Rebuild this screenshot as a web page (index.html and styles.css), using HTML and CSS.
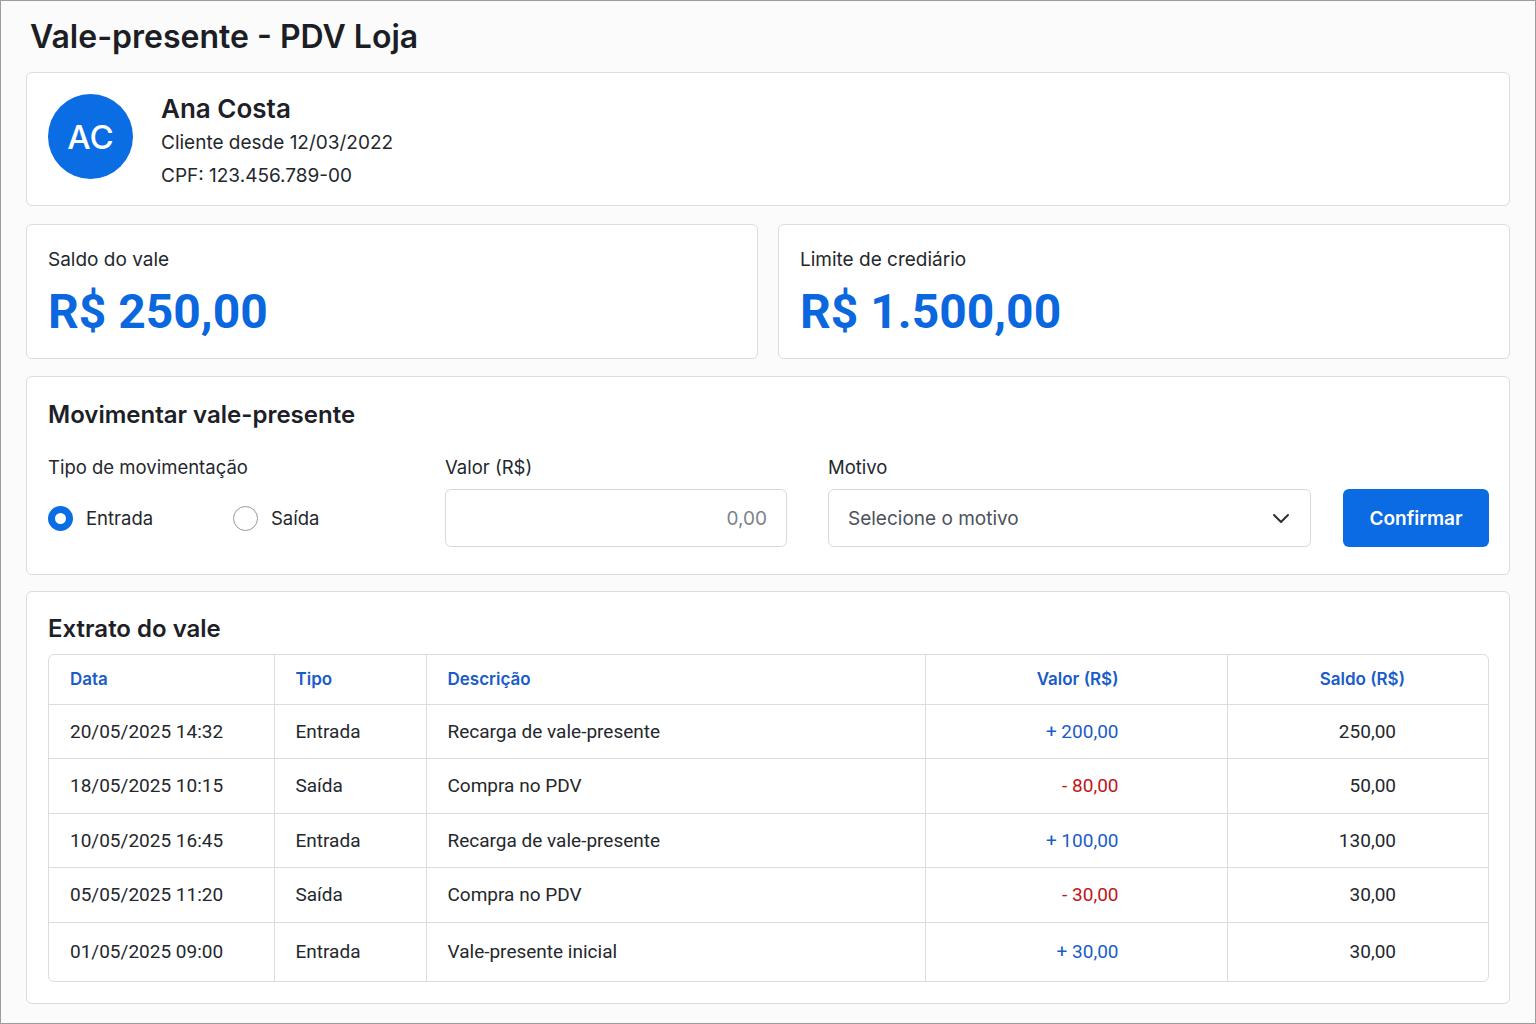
FILE: index.html
```html
<!doctype html>
<html lang="pt-BR">
<head>
    <meta charset="utf-8">
    <title>Vale-presente - PDV Loja</title>
    <link rel="stylesheet" href="styles.css">
</head>

<body>
<div class="page">
    <h1 class="page_title">Vale-presente - PDV Loja</h1>

    <!-- cliente -->
    <div class="card client">
        <div class="avatar">AC</div>
        <div class="client_info">
            <div class="client_name">Ana Costa</div>
            <div class="client_line">Cliente desde 12/03/2022</div>
            <div class="client_line">CPF: 123.456.789-00</div>
        </div>
    </div>

    <!-- saldos -->
    <div class="stats">
        <div class="card stat">
            <div class="stat_label">Saldo do vale</div>
            <div class="stat_value">R$ 250,00</div>
        </div>
        <div class="card stat">
            <div class="stat_label">Limite de crediário</div>
            <div class="stat_value">R$ 1.500,00</div>
        </div>
    </div>

    <!-- movimentar -->
    <div class="card move">
        <h2 class="card_title">Movimentar vale-presente</h2>
        <div class="move_form">
            <div class="field_label">Tipo de movimentação</div>
            <div class="field_label">Valor (R$)</div>
            <div class="field_label">Motivo</div>
            <div></div>

            <div class="radios">
                <label class="radio on"><span class="radio_dot"></span>Entrada</label>
                <label class="radio"><span class="radio_dot"></span>Saída</label>
            </div>
            <div>
                <input class="input" type="text" placeholder="0,00">
            </div>
            <div>
                <div class="select">
                    <span>Selecione o motivo</span>
                    <svg width="18" height="18" viewBox="0 0 18 18">
                        <polyline points="2,6 9,13 16,6" fill="none" stroke="#2b2f36" stroke-width="2" stroke-linecap="round" stroke-linejoin="round"/>
                    </svg>
                </div>
            </div>
            <a href="javascript:;" class="btn">Confirmar</a>
        </div>
    </div>

    <!-- extrato -->
    <div class="card statement">
        <h2 class="card_title">Extrato do vale</h2>
        <div class="table_wrap">
            <table class="table">
                <thead>
                <tr>
                    <th class="c_date">Data</th>
                    <th class="c_type">Tipo</th>
                    <th class="c_desc">Descrição</th>
                    <th class="c_val">Valor (R$)</th>
                    <th class="c_bal">Saldo (R$)</th>
                </tr>
                </thead>
                <tbody>
                <tr>
                    <td>20/05/2025 14:32</td>
                    <td>Entrada</td>
                    <td>Recarga de vale-presente</td>
                    <td class="c_val plus">+ 200,00</td>
                    <td class="c_bal">250,00</td>
                </tr>
                <tr>
                    <td>18/05/2025 10:15</td>
                    <td>Saída</td>
                    <td>Compra no PDV</td>
                    <td class="c_val minus">- 80,00</td>
                    <td class="c_bal">50,00</td>
                </tr>
                <tr>
                    <td>10/05/2025 16:45</td>
                    <td>Entrada</td>
                    <td>Recarga de vale-presente</td>
                    <td class="c_val plus">+ 100,00</td>
                    <td class="c_bal">130,00</td>
                </tr>
                <tr>
                    <td>05/05/2025 11:20</td>
                    <td>Saída</td>
                    <td>Compra no PDV</td>
                    <td class="c_val minus">- 30,00</td>
                    <td class="c_bal">30,00</td>
                </tr>
                <tr>
                    <td>01/05/2025 09:00</td>
                    <td>Entrada</td>
                    <td>Vale-presente inicial</td>
                    <td class="c_val plus">+ 30,00</td>
                    <td class="c_bal">30,00</td>
                </tr>
                </tbody>
            </table>
        </div>
    </div>
</div>
</body>

</html>
```

FILE: styles.css
```css
* {
    box-sizing: border-box;
}

body,
h1,
h2 {
    margin: 0;
    padding: 0;
}

body {
    background-color: #fff;
    font-family: Inter, "Noto Sans", sans-serif;
    color: #1d2027;
}

.page {
    width: 1536px;
    height: 1024px;
    border: 1px solid #9d9d9d;
    background-color: #fbfbfb;
    padding: 16px 25px 0;
}

.page_title {
    font-size: 32px;
    line-height: 40px;
    font-weight: 600;
    padding-left: 4px;
    margin-bottom: 15px;
    color: #1b1e25;
}

.card {
    background-color: #fff;
    border: 1px solid #dcdcdc;
    border-radius: 6px;
}

/* cliente */
.client {
    display: flex;
    align-items: flex-start;
    padding: 19px 21px 13px;
    margin-bottom: 18px;
}

.avatar {
    width: 85px;
    height: 85px;
    margin-top: 2px;
    border-radius: 50%;
    background-color: #0b6de3;
    color: #fff;
    font-size: 33px;
    font-weight: 500;
    display: flex;
    align-items: center;
    justify-content: center;
}

.client_info {
    margin-left: 28px;
}

.client_name {
    font-size: 26px;
    line-height: 34px;
    font-weight: 600;
}

.client_line {
    font-size: 19px;
    line-height: 33px;
    color: #24272d;
}

/* saldos */
.stats {
    display: grid;
    grid-template-columns: 1fr 1fr;
    gap: 20px;
    margin-bottom: 17px;
}

.stat {
    padding: 21px 21px 18px;
}

.stat_label {
    font-size: 19px;
    line-height: 28px;
    color: #24272d;
}

.stat_value {
    margin-top: 10px;
    font-family: Roboto, Inter, sans-serif;
    font-size: 48px;
    line-height: 56px;
    font-weight: 700;
    color: #0a67de;
}

/* movimentar */
.card_title {
    font-size: 24px;
    line-height: 34px;
    font-weight: 600;
}

.move {
    padding: 21px 20px 27px 21px;
    margin-bottom: 16px;
}

.move_form {
    display: grid;
    grid-template-columns: 397px 383px 515px 146px;
    grid-template-rows: 28px 58px;
    row-gap: 8px;
    margin-top: 21px;
}

.field_label {
    font-size: 18.5px;
    line-height: 28px;
    color: #24272d;
}

.radios {
    display: flex;
    align-items: center;
}

.radio {
    display: flex;
    align-items: center;
    width: 185px;
    font-size: 18.5px;
    color: #24272d;
}

.radio_dot {
    width: 25px;
    height: 25px;
    border-radius: 50%;
    border: 1.5px solid #9a9a9a;
    margin-right: 13px;
    background-color: #fff;
}

.radio.on .radio_dot {
    border: 7px solid #0b6de3;
}

.input {
    display: block;
    width: 342px;
    height: 58px;
    border: 1px solid #d8d8d8;
    border-radius: 6px;
    padding: 0 19px;
    text-align: right;
    font-family: Inter, sans-serif;
    font-size: 19px;
    background-color: #fff;
}

.input::placeholder {
    color: #7c818a;
}

.select {
    width: 483px;
    height: 58px;
    border: 1px solid #d8d8d8;
    border-radius: 6px;
    padding: 0 20px 0 19px;
    display: flex;
    align-items: center;
    justify-content: space-between;
    font-size: 19px;
    color: #4c525c;
    background-color: #fff;
}

.btn {
    display: flex;
    align-items: center;
    justify-content: center;
    height: 58px;
    border-radius: 6px;
    background-color: #0a6be3;
    color: #fff;
    font-size: 19px;
    font-weight: 600;
    text-decoration: none;
}

/* extrato */
.statement {
    padding: 20px 20px 21px 21px;
}

.table_wrap {
    margin-top: 8px;
    border: 1px solid #dcdcdc;
    border-radius: 6px;
    overflow: hidden;
}

.table {
    width: 100%;
    border-collapse: collapse;
    font-family: Roboto, Inter, sans-serif;
    font-size: 19px;
}

.table th,
.table td {
    text-align: left;
    padding: 0 21px;
    border-right: 1px solid #dcdcdc;
    border-bottom: 1px solid #dcdcdc;
}

.table th:last-child,
.table td:last-child {
    border-right: 0;
}

.table th {
    height: 49px;
    font-family: Inter, sans-serif;
    font-size: 17px;
    font-weight: 600;
    color: #1a5cc8;
}

.table td {
    height: 54.5px;
    color: #24272d;
}

.table tbody tr:last-child td {
    border-bottom: 0;
    height: 59px;
}

.c_date {
    width: 225px;
}

.c_type {
    width: 152px;
}

.c_desc {
    width: 499px;
}

.table .c_val {
    width: 302px;
    text-align: right;
    padding-right: 108px;
}

.table .c_bal {
    text-align: right;
    padding-right: 92px;
}

.table th.c_bal {
    padding-right: 83px;
}

.table .plus {
    color: #1a5cc8;
}

.table .minus {
    color: #c0141a;
}
```
